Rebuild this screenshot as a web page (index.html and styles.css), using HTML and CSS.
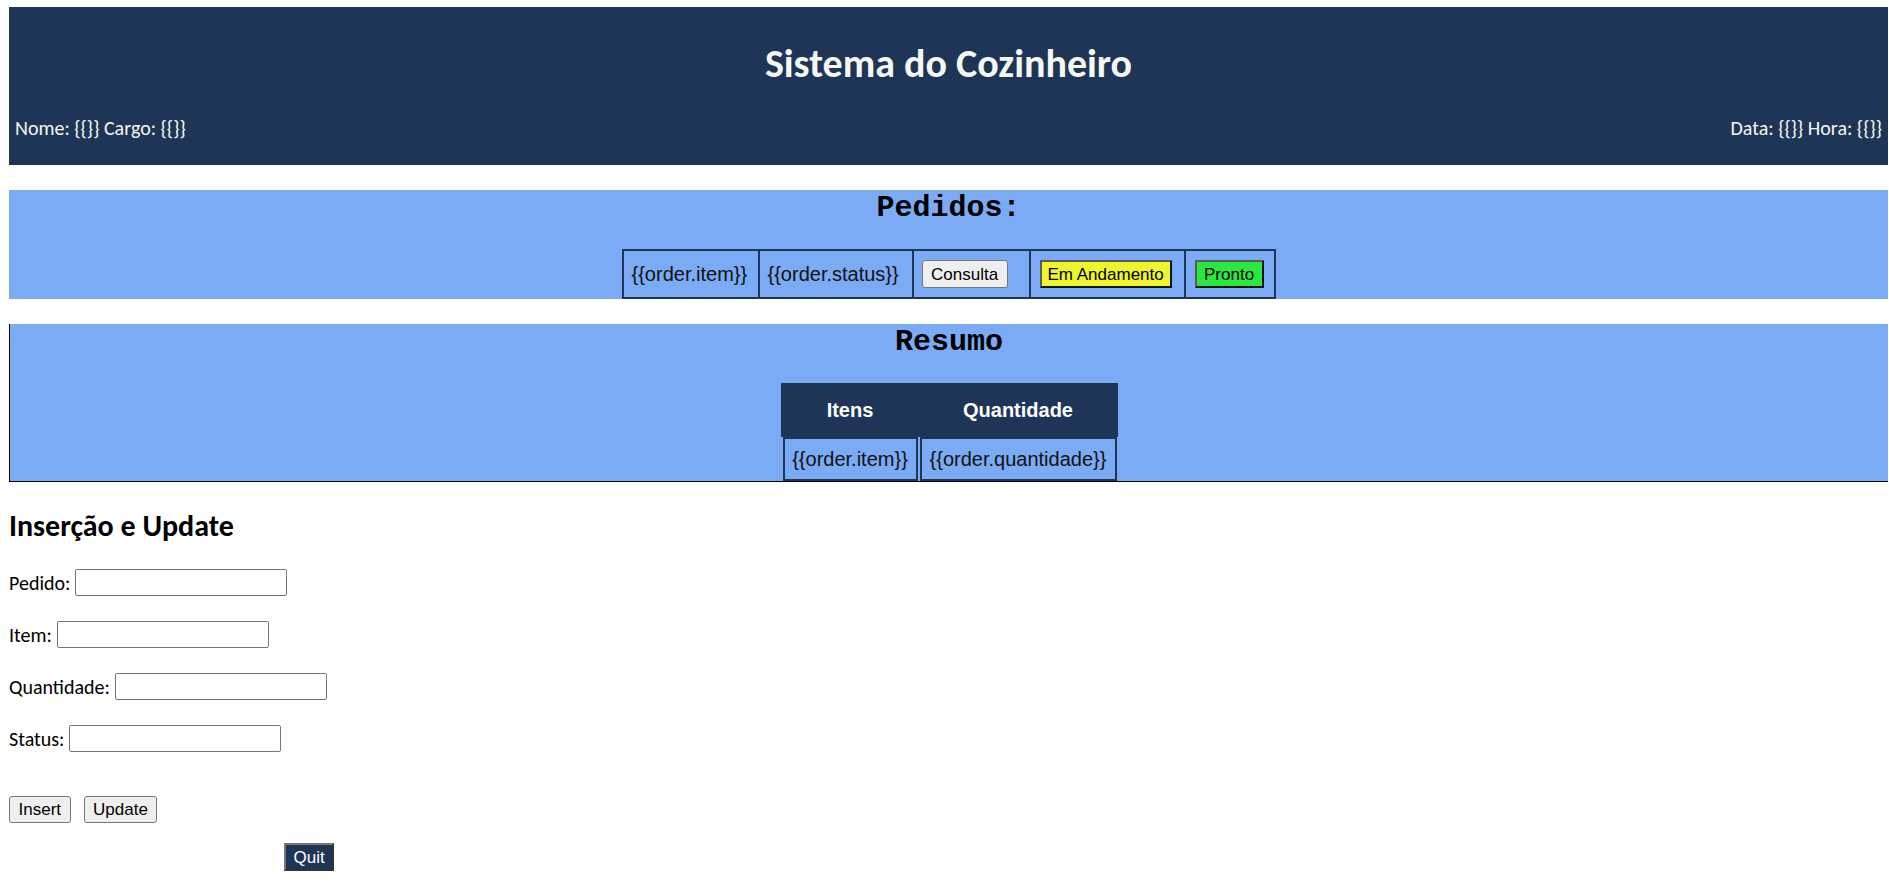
FILE: index.html
```html
<!DOCTYPE html>
<html lang="pt-BR">
<head>
<meta charset="utf-8">
<title>Sistema do Cozinheiro</title>
<link rel="stylesheet" href="styles.css">
</head>
<body>
<header class="topbar">
  <h1 class="title">Sistema do Cozinheiro</h1>
  <div class="info">
    <span>Nome: {{}} Cargo: {{}}</span>
    <span>Data: {{}} Hora: {{}}</span>
  </div>
</header>

<section class="panel orders">
  <h2 class="panel-title">Pedidos:</h2>
  <div class="order-row">
    <div class="cell c1">{{order.item}}</div>
    <div class="cell c2">{{order.status}}</div>
    <div class="cell c3"><button class="btn btn-default">Consulta</button></div>
    <div class="cell c4"><button class="btn btn-yellow">Em Andamento</button></div>
    <div class="cell c5"><button class="btn btn-green">Pronto</button></div>
  </div>
</section>

<section class="panel summary-panel">
  <h2 class="panel-title">Resumo</h2>
  <div class="summary">
    <div class="summary-head">
      <div class="th">Itens</div>
      <div class="th">Quantidade</div>
    </div>
    <div class="summary-body">
      <div class="td">{{order.item}}</div>
      <div class="td">{{order.quantidade}}</div>
    </div>
  </div>
</section>

<section class="form">
  <h2 class="form-title">Inserção e Update</h2>
  <div class="field"><label>Pedido:</label><input type="text"></div>
  <div class="field"><label>Item:</label><input type="text"></div>
  <div class="field"><label>Quantidade:</label><input type="text"></div>
  <div class="field"><label>Status:</label><input type="text"></div>
  <div class="actions">
    <button class="btn btn-default btn-form">Insert</button>
    <button class="btn btn-default btn-form">Update</button>
  </div>
  <div class="quit-row">
    <button class="btn btn-quit">Quit</button>
  </div>
</section>
</body>
</html>
```
FILE: styles.css
```css
* { box-sizing: border-box; }

body {
  margin: 7px 1px 0 9px;
  font-family: Carlito, Calibri, Lato, sans-serif;
  font-size: 20px;
  color: #000;
  background: #fff;
}

.topbar {
  background: #1e3557;
  color: #f5f8f0;
  padding: 33px 6px 25px;
}

.title {
  margin: 0;
  text-align: center;
  font-size: 40px;
  line-height: 48px;
  font-weight: 700;
}

.info {
  margin-top: 28px;
  display: flex;
  justify-content: space-between;
  line-height: 24px;
}

.panel {
  margin-top: 25px;
  background: #7aabf4;
}

.panel-title {
  margin: 0 0 25px;
  padding-top: 1px;
  height: 34px;
  text-align: center;
  font-family: "Liberation Mono", "Courier New", monospace;
  font-weight: 700;
  font-size: 30px;
  line-height: 34px;
}

.order-row {
  display: flex;
  width: 654px;
  height: 50px;
  margin: 0 auto;
  border: 2px solid #1e3557;
  font-family: "Liberation Sans", Arial, sans-serif;
  font-size: 20px;
  color: #111;
}

.cell {
  display: flex;
  align-items: center;
  padding-left: 8px;
  white-space: nowrap;
}
.cell + .cell { border-left: 2px solid #1e3557; }
.c1 { width: 134px; }
.c2 { width: 154px; }
.c3 { width: 117px; }
.c4 { width: 155px; padding-left: 9px; }
.c5 { width: 90px; padding-left: 9px; }

.btn {
  font-family: "Liberation Sans", Arial, sans-serif;
  font-size: 17px;
  line-height: 19px;
  padding: 0 7.5px;
  height: 28px;
  color: #000;
  cursor: pointer;
  white-space: nowrap;
}
.btn-default {
  background: #efefef;
  border: 1px solid #767676;
  border-radius: 3px;
  padding: 0 8.5px;
}
.btn-yellow {
  background: #eef52b;
  border: 2px solid;
  border-color: #5a5a5a #111 #111 #5a5a5a;
  border-radius: 0;
  padding: 0 6px;
}
.btn-green {
  background: #2ae83f;
  border: 2px solid;
  border-color: #5a5a5a #111 #111 #5a5a5a;
  border-radius: 0;
}
.btn-quit {
  background: #1e3557;
  color: #fff;
  border: 2px solid;
  border-color: #777 #333 #333 #777;
  border-radius: 0;
  padding: 0 7.5px;
}

.summary-panel {
  border-left: 1px solid #000;
  border-bottom: 1px solid #000;
}

.summary {
  width: 337px;
  margin: 0 auto;
  font-family: "Liberation Sans", Arial, sans-serif;
  font-size: 20px;
}

.summary-head,
.summary-body {
  display: grid;
  grid-template-columns: 135px 197px;
  column-gap: 2px;
  padding: 0 1px 0 2px;
}

.summary-head {
  background: #1e3557;
  color: #fff;
  height: 54px;
}

.th {
  display: flex;
  align-items: center;
  justify-content: center;
  font-weight: 700;
}

.td {
  height: 44px;
  display: flex;
  align-items: center;
  justify-content: center;
  border: 2px solid #1e3557;
  color: #111;
  white-space: nowrap;
}

.form-title {
  margin: 26px 0 25px;
  font-size: 30px;
  line-height: 36px;
  font-weight: 700;
}

.field {
  display: flex;
  align-items: center;
  gap: 5px;
  height: 27px;
  margin-bottom: 25px;
}

.field input {
  width: 212px;
  height: 27px;
  border: 1px solid #767676;
  border-radius: 2px;
  background: #fff;
  padding: 1px 2px;
  font-size: 16px;
}

.actions {
  display: flex;
  gap: 13px;
  margin-top: 44px;
}

.btn-form { height: 27px; }

.quit-row {
  margin-top: 20px;
  padding-left: 275px;
}
```
